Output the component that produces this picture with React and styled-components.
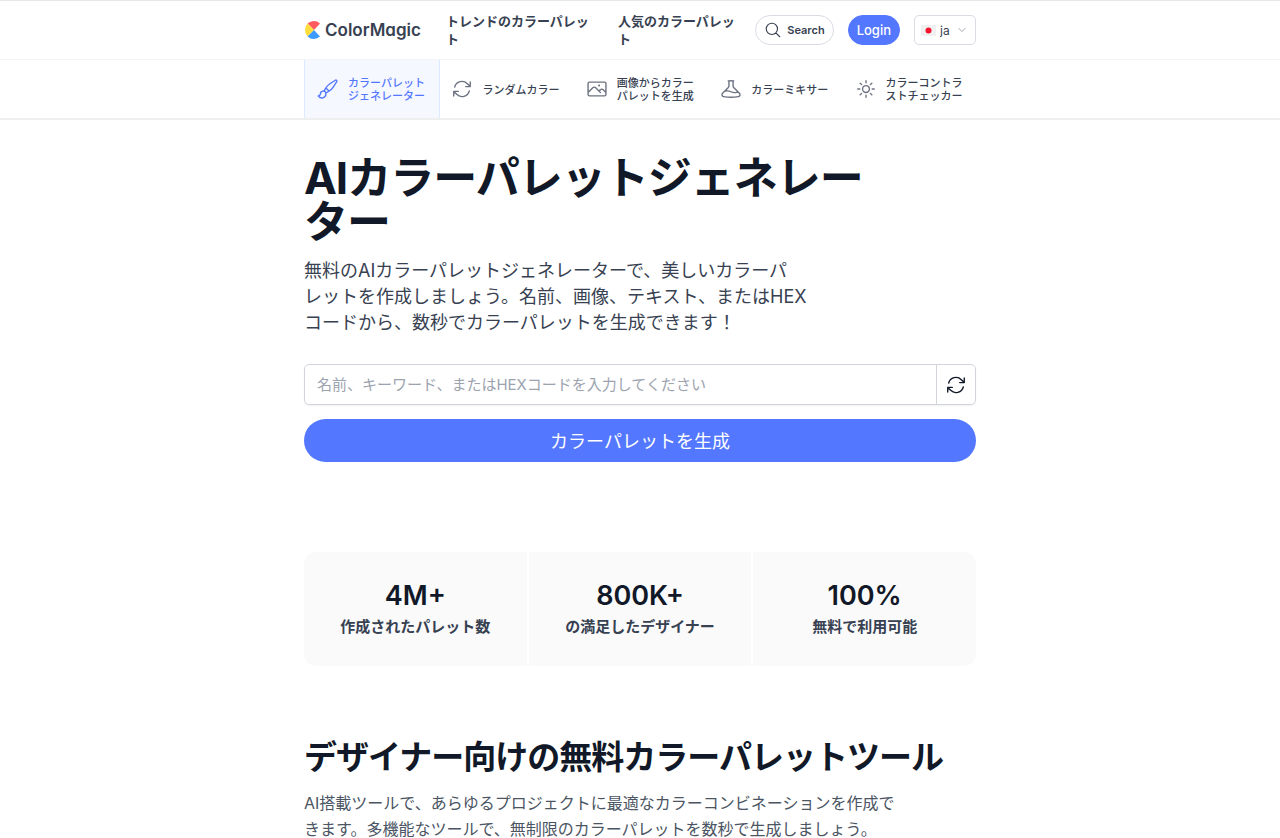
import React from 'react';
import styled, { createGlobalStyle } from 'styled-components';
import {
  HiOutlinePaintBrush,
  HiOutlineArrowPath,
  HiOutlinePhoto,
  HiOutlineBeaker,
  HiOutlineSun,
  HiOutlineMagnifyingGlass,
  HiOutlineChevronDown,
} from 'react-icons/hi2';

const Global = createGlobalStyle`
  *, *::before, *::after { box-sizing: border-box; }
  body {
    margin: 0;
    background: #fff;
    color: #111827;
    font-family: Inter, "Noto Sans CJK JP", sans-serif;
  }
  h1, h2, p, dl, dd { margin: 0; padding: 0; }
  a { color: inherit; text-decoration: none; }
  button, input, select { font: inherit; }
  svg { display: block; flex: none; }
`;

const Container = styled.div`
  width: 100%;
  max-width: 672px;
  margin: 0 auto;
`;

const Header = styled.header`
  border-top: 1px solid #e5e7eb;
  border-bottom: 1px solid #f3f4f6;
`;

const HeaderRow = styled(Container)`
  display: flex;
  align-items: center;
  min-height: 58px;
`;

const Logo = styled.a`
  display: flex;
  align-items: center;
  gap: 3px;
  width: 142px;
  flex: none;
  color: #374151;
  font-size: 17px;
  line-height: 24px;
  font-weight: 600;
  font-feature-settings: "cv11";
`;

const MainNav = styled.nav`
  flex: 1;
  display: flex;
  gap: 26px;
  color: #374151;
  font-size: 13px;
  line-height: 18px;
  font-weight: 600;
`;

const NavLink = styled.a`
  width: ${(p) => p.$width};
`;

const Actions = styled.div`
  display: flex;
  gap: 14px;
`;

const PillButton = styled.button`
  display: flex;
  align-items: center;
  gap: 5px;
  height: 30px;
  padding: 0 8px;
  border-radius: 15px;
  border: 1px solid ${(p) => (p.$primary ? '#5477ff' : '#d9dce3')};
  background: ${(p) => (p.$primary ? '#5477ff' : '#fff')};
  color: ${(p) => (p.$primary ? '#fff' : '#374151')};
  font-size: ${(p) => (p.$primary ? '13px' : '11px')};
  font-weight: ${(p) => (p.$primary ? '500' : '600')};
  cursor: pointer;
`;

const Language = styled.label`
  display: grid;
  grid-template-columns: 15px 1fr 10px;
  align-items: center;
  gap: 4px;
  width: 62px;
  height: 30px;
  padding: 0 8px 0 6px;
  border: 1px solid #d9dce3;
  border-radius: 5px;
  color: #374151;
`;

const LanguageSelect = styled.select`
  appearance: none;
  border: 0;
  padding: 0;
  width: 100%;
  background: transparent;
  color: inherit;
  font-size: 12px;
  outline: none;
`;

const ToolBar = styled.nav`
  border-bottom: 2px solid #eeeff1;
`;

const ToolList = styled(Container)`
  display: grid;
  grid-template-columns: repeat(5, 1fr);
`;

const ToolLink = styled.a`
  display: flex;
  align-items: center;
  gap: 9px;
  min-height: 58px;
  margin-right: ${(p) => (p.$active ? '-2px' : '0')};
  padding: 0 6px 0 12px;
  border: 1px solid ${(p) => (p.$active ? '#dbeafe' : 'transparent')};
  border-width: 0 1px;
  background: ${(p) => (p.$active ? '#f5f8ff' : 'transparent')};
  color: ${(p) => (p.$active ? '#5477ff' : '#374151')};
  font-size: 11px;
  line-height: 13px;
  font-weight: 500;
  svg { color: ${(p) => (p.$active ? '#5477ff' : '#6b7280')}; }
  span { padding-top: 2px; }
`;

const Title = styled.h1`
  max-width: 576px;
  padding-top: 36px;
  font-size: 44px;
  line-height: 44px;
  font-weight: 700;
  letter-spacing: -1px;
`;

const Lead = styled.p`
  margin-top: 14px;
  color: #374151;
  font-size: 18px;
  line-height: 26px;
`;

const Form = styled.form`
  display: grid;
  gap: 14px;
  margin-top: 28px;
`;

const Field = styled.div`
  display: flex;
  height: 41px;
  border: 1px solid #d1d5db;
  border-radius: 5px;
  box-shadow: 0 1px 2px rgba(0, 0, 0, 0.06);
`;

const FieldInput = styled.input`
  flex: 1;
  min-width: 0;
  padding: 0 12px;
  border: 0;
  background: transparent;
  outline: none;
  font-size: 15px;
  &::placeholder { color: #9ca3af; opacity: 1; }
`;

const FieldButton = styled.button`
  display: grid;
  place-items: center;
  width: 39px;
  padding: 0;
  border: 0;
  border-left: 1px solid #d1d5db;
  background: transparent;
  color: #111827;
  cursor: pointer;
`;

const Submit = styled.button`
  height: 43px;
  padding: 0 0 2px;
  border: 0;
  border-radius: 22px;
  background: #5477ff;
  color: #fff;
  font-size: 18px;
  cursor: pointer;
`;

const Stats = styled.dl`
  display: grid;
  grid-template-columns: repeat(3, 1fr);
  gap: 2px;
  margin-top: 90px;
  border-radius: 12px;
  overflow: hidden;
`;

const Stat = styled.div`
  display: flex;
  flex-direction: column-reverse;
  gap: 4px;
  padding: 27px 8px 28px;
  background: #fafafa;
  text-align: center;
`;

const StatLabel = styled.dt`
  color: #374151;
  font-size: 15px;
  line-height: 22px;
  font-weight: 600;
`;

const StatValue = styled.dd`
  font-size: 27px;
  line-height: 33px;
  font-weight: 600;
`;

const Section = styled.section`
  padding: 72px 0 24px;
`;

const SectionTitle = styled.h2`
  font-size: 33px;
  line-height: 38px;
  font-weight: 700;
  letter-spacing: -1px;
`;

const SectionText = styled.p`
  max-width: 600px;
  margin-top: 14px;
  color: #4b5563;
  font-size: 16px;
  line-height: 26px;
`;

const LogoMark = () => (
  <svg width="18" height="20" viewBox="0 0 18 20" aria-hidden="true">
    <path d="M10 10 3.600 3.600A9 9 0 0 1 16 3.500Z" fill="#ff5a5f" />
    <path d="M10 10 3.600 3.600a9 9 0 0 0 0 12.800Z" fill="#ffdd3c" />
    <path d="M10 10 3.600 16.400a9 9 0 0 0 12.400 .1Z" fill="#3b9bff" />
  </svg>
);

const FlagJapan = () => (
  <svg width="15" height="11" viewBox="0 0 15 11" aria-hidden="true">
    <rect width="15" height="11" fill="#f0f0f0" />
    <circle cx="7.500" cy="5.500" r="3" fill="#f5142d" />
  </svg>
);

const TOOLS = [
  { label: 'カラーパレットジェネレーター', Icon: HiOutlinePaintBrush, active: true },
  { label: 'ランダムカラー', Icon: HiOutlineArrowPath },
  { label: '画像からカラーパレットを生成', Icon: HiOutlinePhoto },
  { label: 'カラーミキサー', Icon: HiOutlineBeaker },
  { label: 'カラーコントラストチェッカー', Icon: HiOutlineSun },
];

const STATS = [
  ['4M+', '作成されたパレット数'],
  ['800K+', 'の満足したデザイナー'],
  ['100%', '無料で利用可能'],
];

export default function App() {
  return (
    <>
      <Global />
      <Header>
        <HeaderRow>
          <Logo href="#"><LogoMark />ColorMagic</Logo>
          <MainNav>
            <NavLink href="#" $width="146px">トレンドのカラーパレット</NavLink>
            <NavLink href="#" $width="122px">人気のカラーパレット</NavLink>
          </MainNav>
          <Actions>
            <PillButton type="button"><HiOutlineMagnifyingGlass size={18} />Search</PillButton>
            <PillButton type="button" $primary>Login</PillButton>
            <Language>
              <FlagJapan />
              <LanguageSelect aria-label="Language" defaultValue="ja">
                <option>ja</option>
                <option>en</option>
              </LanguageSelect>
              <HiOutlineChevronDown size={10} color="#6b7280" />
            </Language>
          </Actions>
        </HeaderRow>
      </Header>
      <ToolBar>
        <ToolList>
          {TOOLS.map(({ label, Icon, active }) => (
            <ToolLink key={label} href="#" $active={active}>
              <Icon size={22} />
              <span>{label}</span>
            </ToolLink>
          ))}
        </ToolList>
      </ToolBar>
      <Container as="main">
        <Title>AIカラーパレットジェネレーター</Title>
        <Lead>
          無料のAIカラーパレットジェネレーターで、美しいカラーパ<br />
          レットを作成しましょう。名前、画像、テキスト、またはHEX<br />
          コードから、数秒でカラーパレットを生成できます！
        </Lead>
        <Form onSubmit={(e) => e.preventDefault()}>
          <Field>
            <FieldInput aria-label="キーワード" placeholder="名前、キーワード、またはHEXコードを入力してください" />
            <FieldButton type="button" aria-label="ランダム"><HiOutlineArrowPath size={22} /></FieldButton>
          </Field>
          <Submit>カラーパレットを生成</Submit>
        </Form>
        <Stats>
          {STATS.map(([value, label]) => (
            <Stat key={label}>
              <StatLabel>{label}</StatLabel>
              <StatValue>{value}</StatValue>
            </Stat>
          ))}
        </Stats>
        <Section>
          <SectionTitle>デザイナー向けの無料カラーパレットツール</SectionTitle>
          <SectionText>
            AI搭載ツールで、あらゆるプロジェクトに最適なカラーコンビネーションを作成できます。多機能なツールで、無制限のカラーパレットを数秒で生成しましょう。
          </SectionText>
        </Section>
      </Container>
    </>
  );
}
